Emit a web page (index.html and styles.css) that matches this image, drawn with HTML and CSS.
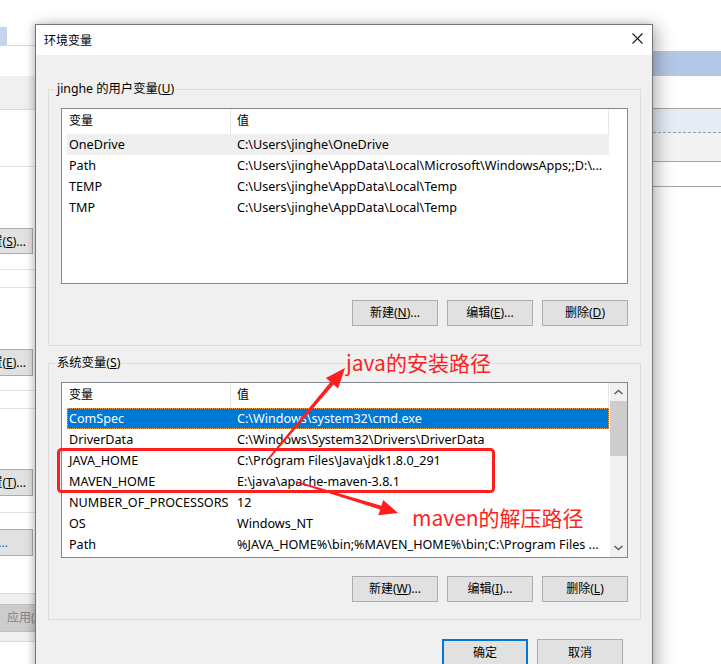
FILE: index.html
```html
<!DOCTYPE html>
<html lang="zh-CN">
<head>
<meta charset="utf-8">
<title>环境变量</title>
<link rel="stylesheet" href="styles.css">
</head>
<body>
<div class="desktop">
  <div class="bg-left">
    <div class="bl-tab"><span class="bl-tab-blue"></span></div>
    <div class="bl-band"></div>
    <div class="bl-line"></div>
    <div class="bl-btn bl-btn1">设置(<u>S</u>)...</div>
    <div class="bl-pair bl-pair1"></div>
    <div class="bl-btn bl-btn2">设置(<u>E</u>)...</div>
    <div class="bl-pair bl-pair2"></div>
    <div class="bl-btn bl-btn3">设置(<u>T</u>)...</div>
    <div class="bl-line bl-line2"></div>
    <div class="bl-btn bl-btn4">环境变量(N)<span class="bl-dots">...</span></div>
    <div class="bl-foot"><div class="bl-apply">应用(A)</div></div>
  </div>

  <div class="dialog">
    <div class="titlebar">
      <span class="title">环境变量</span>
      <svg class="close" width="11" height="11" viewBox="0 0 11 11"><path d="M0.5 0.5L10.5 10.5M10.5 0.5L0.5 10.5" stroke="#1a1a1a" stroke-width="1.1" fill="none"/></svg>
    </div>
    <div class="dlg-body">
      <fieldset class="group group-user">
        <legend>jinghe 的用户变量(<u>U</u>)</legend>
        <div class="listview">
          <div class="lv-main">
            <div class="lv-head"><div class="c1">变量</div><div class="c2">值</div></div>
            <div class="lv-row hot"><div class="c1">OneDrive</div><div class="c2">C:\Users\jinghe\OneDrive</div></div>
            <div class="lv-row"><div class="c1">Path</div><div class="c2">C:\Users\jinghe\AppData\Local\Microsoft\WindowsApps;;D:\...</div></div>
            <div class="lv-row"><div class="c1">TEMP</div><div class="c2">C:\Users\jinghe\AppData\Local\Temp</div></div>
            <div class="lv-row"><div class="c1">TMP</div><div class="c2">C:\Users\jinghe\AppData\Local\Temp</div></div>
          </div>
        </div>
        <div class="btn-row btn-row-user">
          <button class="btn">新建(<u>N</u>)...</button>
          <button class="btn">编辑(<u>E</u>)...</button>
          <button class="btn">删除(<u>D</u>)</button>
        </div>
      </fieldset>

      <fieldset class="group group-sys">
        <legend>系统变量(<u>S</u>)</legend>
        <div class="listview">
          <div class="lv-main">
            <div class="lv-head"><div class="c1">变量</div><div class="c2">值</div></div>
            <div class="lv-row sel"><div class="c1">ComSpec</div><div class="c2">C:\Windows\system32\cmd.exe</div></div>
            <div class="lv-row"><div class="c1">DriverData</div><div class="c2">C:\Windows\System32\Drivers\DriverData</div></div>
            <div class="lv-row"><div class="c1">JAVA_HOME</div><div class="c2">C:\Program Files\Java\jdk1.8.0_291</div></div>
            <div class="lv-row"><div class="c1">MAVEN_HOME</div><div class="c2">E:\java\apache-maven-3.8.1</div></div>
            <div class="lv-row"><div class="c1">NUMBER_OF_PROCESSORS</div><div class="c2">12</div></div>
            <div class="lv-row"><div class="c1">OS</div><div class="c2">Windows_NT</div></div>
            <div class="lv-row"><div class="c1">Path</div><div class="c2">%JAVA_HOME%\bin;%MAVEN_HOME%\bin;C:\Program Files ...</div></div>
          </div>
          <div class="scrollbar">
            <div class="sb-arrow"><svg width="17" height="17" viewBox="0 0 17 17"><polyline points="4.5,11 8.5,7.5 12.5,11" fill="none" stroke="#606060" stroke-width="1.6"/></svg></div>
            <div class="sb-thumb"></div>
            <div class="sb-track"></div>
            <div class="sb-arrow"><svg width="17" height="17" viewBox="0 0 17 17"><polyline points="4.5,6 8.5,9.5 12.5,6" fill="none" stroke="#606060" stroke-width="1.6"/></svg></div>
          </div>
        </div>
        <div class="btn-row btn-row-sys">
          <button class="btn">新建(<u>W</u>)...</button>
          <button class="btn">编辑(<u>I</u>)...</button>
          <button class="btn">删除(<u>L</u>)</button>
        </div>
      </fieldset>

      <div class="footer">
        <button class="btn btn-default">确定</button>
        <button class="btn">取消</button>
      </div>
    </div>
  </div>

  <div class="bg-right">
    <div class="br-blue"></div>
    <div class="br-sel"></div>
    <div class="br-gray"></div>
    <div class="br-row"></div>
    <div class="br-rest"></div>
  </div>
</div>

<svg class="annot" width="721" height="664" viewBox="0 0 721 664">
  <rect x="58.5" y="449.5" width="435" height="42" rx="3" ry="3" fill="none" stroke="#ff1f1f" stroke-width="3"/>
  <polygon points="268,458 330.5,381.9 325.9,378 345,368 338.1,388.4 333.5,384.5 269.5,459" fill="#ff1f1f"/>
  <polygon points="296,481 381.4,505.8 383.2,500.1 398,513 378.4,515.3 380.2,509.6 295.5,482.5" fill="#ff1f1f"/>
</svg>
<div class="note note-java">java的安装路径</div>
<div class="note note-maven">maven的解压路径</div>
</body>
</html>
```

FILE: styles.css
```css
* { box-sizing: border-box; }
html, body { margin: 0; padding: 0; }
body {
  width: 721px;
  height: 664px;
  overflow: hidden;
  position: relative;
  background: #fff;
  font-family: "Noto Sans", "Noto Sans CJK SC", sans-serif;
  font-size: 12px;
  color: #000;
}
u { text-decoration: underline; text-underline-offset: 1px; }

.desktop { display: flex; height: 664px; }

/* ---------- background window, left strip ---------- */
.bg-left {
  width: 35px;
  flex: none;
  display: flex;
  flex-direction: column;
  overflow: hidden;
  background: #fff;
}
.bl-tab {
  margin-top: 27px;
  height: 19px;
  border-bottom: 1px solid #dadada;
}
.bl-tab-blue { display: block; width: 7px; height: 18px; background: #c3d4ec; }
.bl-band {
  margin-top: 30px;
  height: 34px;
  background: #f0f0f0;
  border-bottom: 1px solid #d9d9d9;
}
.bl-line { margin-top: 56px; height: 1px; background: #e3e3e3; flex: none; }
.bl-line2 { margin-top: 16px; }
.bl-btn {
  flex: none;
  margin-left: -70px;
  width: 103px;
  height: 27px;
  line-height: 25px;
  background: #e1e1e1;
  border: 1px solid #adadad;
  text-align: right;
  padding-right: 6px;
  white-space: nowrap;
}
.bl-btn1 { margin-top: 61px; height: 26px; }
.bl-btn2 { margin-top: 61px; }
.bl-btn3 { margin-top: 60px; }
.bl-btn4 { margin-top: 16px; color: transparent; padding-right: 24px; }
.bl-dots { color: #2a6f9a; }
.bl-pair {
  flex: none;
  height: 19px;
  border-top: 1px solid #e3e3e3;
  border-bottom: 1px solid #e3e3e3;
}
.bl-pair1 { margin-top: 15px; }
.bl-pair2 { margin-top: 14px; }
.bl-foot {
  flex: none;
  margin-top: 37px;
  background: #f0f0f0;
  border-top: 1px solid #dcdcdc;
  border-bottom: 1px solid #dcdcdc;
  padding: 10px 0 9px;
}
.bl-apply {
  margin-left: -2px;
  width: 100px;
  height: 28px;
  line-height: 26px;
  background: #cccccc;
  border: 1px solid #bfbfbf;
  color: #838383;
  padding-left: 8px;
  white-space: nowrap;
}

/* ---------- background window, right strip ---------- */
.bg-right {
  flex: 1;
  display: flex;
  flex-direction: column;
  background: #fff;
}
.br-blue { margin-top: 51px; height: 25px; background: #b4c8e6; }
.br-sel {
  margin-top: 32px;
  height: 25px;
  background: #e5ecf6;
  border-top: 1px solid #a6a6a6;
  border-bottom: 1px dashed #a0a0a0;
}
.br-gray { height: 29px; background: #f3f3f3; border-bottom: 1px solid #a6a6a6; }
.br-row { height: 25px; border-bottom: 1px solid #a6a6a6; }
.br-rest { flex: 1; background: #fff; }

/* ---------- dialog ---------- */
.dialog {
  width: 618px;
  flex: none;
  margin-top: 24px;
  height: 660px;
  background: #f0f0f0;
  border: 1px solid #767676;
  border-bottom: none;
  position: relative;
  z-index: 2;
  box-shadow: 5px 2px 16px rgba(0,0,0,0.28), -2px 0 6px rgba(0,0,0,0.16);
  display: flex;
  flex-direction: column;
}
.titlebar {
  height: 30px;
  flex: none;
  background: #fff;
  display: flex;
  align-items: center;
  justify-content: space-between;
  padding: 0 9px 0 8px;
}
.title { font-size: 12px; }
.close { margin-top: -4px; }

.dlg-body { display: flex; flex-direction: column; }

.group {
  margin: 0 11px 0 12px;
  padding: 0 12px;
  border: 1px solid #dcdcdc;
  min-width: 0;
}
.group legend {
  margin-left: -6px;
  padding: 0 2px;
  height: 16px;
  line-height: 16px;
  font-size: 12.3px;
}
.group-user { margin-top: 26px; padding-bottom: 19px; }
.group-sys { margin-top: 9px; padding-bottom: 17px; }

.listview {
  margin-top: 11px;
  height: 176px;
  border: 1px solid #828790;
  background: #fff;
  display: flex;
  overflow: hidden;
}
.lv-main { flex: 1; padding-left: 5px; overflow: hidden; }
.lv-head { display: flex; height: 25px; align-items: stretch; }
.lv-head .c1, .lv-head .c2 {
  line-height: 24px;
  border-right: 1px solid #e5e5e5;
  font-size: 12px;
}
.lv-row { display: flex; height: 21px; width: 542px; font-size: 12.6px; }
.c1 {
  width: 164px;
  flex: none;
  padding-left: 2px;
  white-space: nowrap;
  overflow: hidden;
  line-height: 21px;
}
.c2 {
  width: 378px;
  flex: none;
  padding-left: 6px;
  white-space: nowrap;
  overflow: hidden;
  line-height: 21px;
}
.lv-row.hot { background: #efefef; }
.lv-row.sel {
  background: #0078d7;
  color: #fff;
  outline: 1px dotted #f0a040;
  outline-offset: -1px;
}

.scrollbar {
  width: 17px;
  flex: none;
  background: #f0f0f0;
  display: flex;
  flex-direction: column;
}
.sb-arrow { height: 17px; flex: none; }
.sb-arrow svg { display: block; }
.sb-thumb { height: 55px; margin-top: 1px; background: #cdcdcd; flex: none; }
.sb-track { flex: 1; }

.btn-row { display: flex; justify-content: flex-end; gap: 9px; }
.btn-row-user { margin-top: 16px; }
.btn-row-sys { margin-top: 18px; }
.btn {
  width: 86px;
  height: 26px;
  padding: 0;
  margin: 0;
  background: #e1e1e1;
  border: 1px solid #adadad;
  font-family: "Noto Sans", "Noto Sans CJK SC", sans-serif;
  font-size: 12px;
  color: #000;
  line-height: 24px;
}
.footer {
  display: flex;
  justify-content: flex-end;
  gap: 9px;
  margin: 19px 29px 0 0;
}
.footer .btn { height: 27px; }
.btn-default { border: 2px solid #0078d7; }

/* ---------- annotations ---------- */
.annot {
  position: absolute;
  left: 0;
  top: 0;
  z-index: 5;
  pointer-events: none;
}
.note {
  position: absolute;
  z-index: 6;
  color: #ff1f1f;
  font-family: "Noto Sans CJK SC", "Noto Sans", sans-serif;
  font-size: 21px;
  line-height: 24px;
  white-space: nowrap;
}
.note-java { left: 346px; top: 350px; }
.note-maven { left: 412px; top: 505px; }
```
